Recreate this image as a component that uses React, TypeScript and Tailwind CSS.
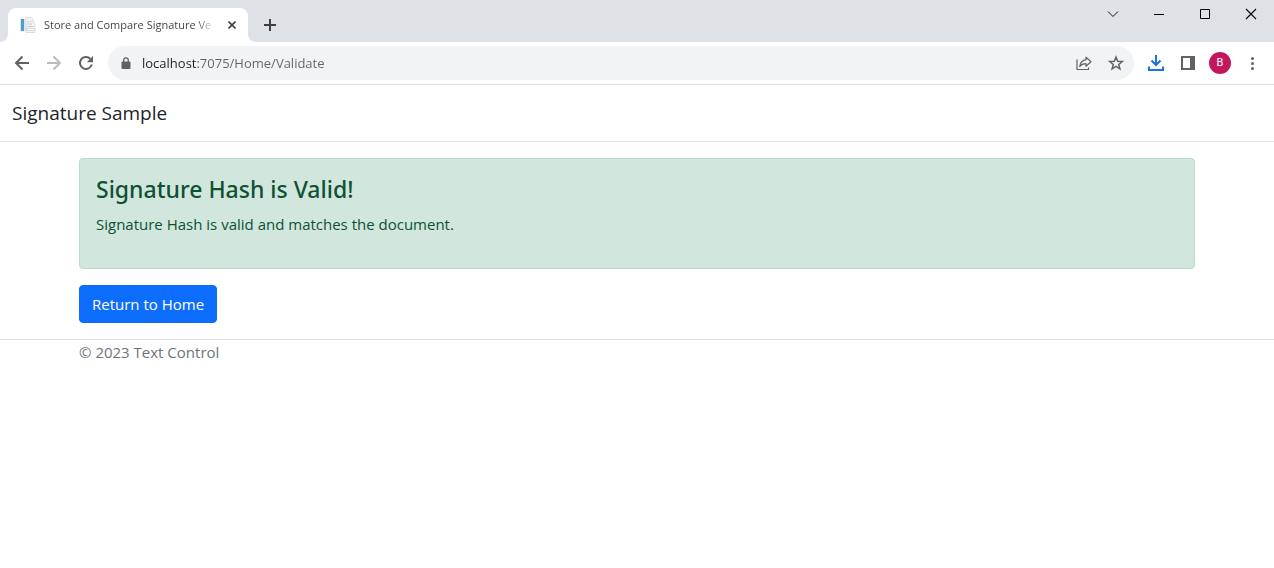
import type { ReactNode } from 'react';

type IconButtonProps = {
  label: string;
  className?: string;
  children: ReactNode;
};

function IconButton({ label, className = 'h-8 w-8', children }: IconButtonProps) {
  return (
    <button type="button" aria-label={label} className={`flex shrink-0 items-center justify-center ${className}`}>
      {children}
    </button>
  );
}

function TabStrip() {
  return (
    <div className="flex h-[42px] items-start bg-[#dee1e6]">
      <div className="flex items-end pt-2">
        <svg className="h-2 w-2" viewBox="0 0 8 8" fill="#fff">
          <path d="M8 0v8H0a8 8 0 0 0 8-8z" />
        </svg>
        <div className="flex h-[34px] w-60 items-center rounded-t-lg bg-white pr-2 pl-3">
          <svg className="h-4 w-4 shrink-0" viewBox="0 0 16 16">
            <path d="M0 1.5h6v13H0z" fill="#dfe7ee" />
            <path d="M1 2h3v12H1z" fill="#4c9ccf" />
            <path d="M5.500.5h6l2 2V13h-8z" fill="#eff1f4" stroke="#d8dbdf" strokeWidth=".6" />
            <path d="M7.500 4.500h5l2.500 2.500v8.500H6z" fill="#f4f4f6" stroke="#cfd2d6" strokeWidth=".7" />
            <path d="M8 7h4M8 9.500h5.500" stroke="#c6cacf" />
            <path d="M7 11.500h7v2H7z" fill="#fff" stroke="#c6cacf" strokeWidth=".6" />
          </svg>
          <span className="ml-2 min-w-0 flex-1 bg-linear-to-r from-[#3c4043] from-88% to-transparent bg-clip-text text-[11px] whitespace-nowrap text-transparent">
            Store and Compare Signature Ve
          </span>
          <IconButton label="Close tab" className="ml-2 h-4 w-4">
            <svg className="h-2 w-2" viewBox="0 0 8 8" stroke="#3c4043" strokeWidth="1.6">
              <path d="M.5.5l7 7M7.500.5l-7 7" />
            </svg>
          </IconButton>
        </div>
        <svg className="h-2 w-2" viewBox="0 0 8 8" fill="#fff">
          <path d="M0 0v8h8a8 8 0 0 1-8-8z" />
        </svg>
      </div>
      <IconButton label="New tab" className="mt-[11px] h-7 w-7">
        <svg className="h-3 w-3" viewBox="0 0 12 12" stroke="#3c4043" strokeWidth="2">
          <path d="M6 0v12M0 6h12" />
        </svg>
      </IconButton>
      <div className="ml-auto flex">
        <IconButton label="Search tabs" className="h-7 w-[46px]">
          <svg className="h-3 w-3" viewBox="0 0 12 12" fill="none" stroke="#111">
            <path d="M1 3.500l5 5 5-5" />
          </svg>
        </IconButton>
        <IconButton label="Minimize" className="h-7 w-[46px]">
          <svg className="h-3 w-3" viewBox="0 0 12 12" stroke="#000">
            <path d="M1 6.500h10" />
          </svg>
        </IconButton>
        <IconButton label="Maximize" className="h-7 w-[46px]">
          <svg className="h-3 w-3" viewBox="0 0 12 12" fill="none" stroke="#000">
            <path d="M1.500 1.500h9v9h-9z" />
          </svg>
        </IconButton>
        <IconButton label="Close window" className="h-7 w-[46px]">
          <svg className="h-3 w-3" viewBox="0 0 12 12" stroke="#000" strokeWidth="1.1">
            <path d="M1 1l10 10M11 1L1 11" />
          </svg>
        </IconButton>
      </div>
    </div>
  );
}

function Toolbar() {
  return (
    <div className="flex h-[43px] items-center border-b border-[#dadce0] bg-white px-1.5">
      <IconButton label="Back">
        <svg className="h-4 w-4" viewBox="0 0 16 16" fill="none" stroke="#5f6368" strokeWidth="2">
          <path d="M15 8H2.500M8.500 1.500L2 8l6.500 6.500" />
        </svg>
      </IconButton>
      <IconButton label="Forward">
        <svg className="h-4 w-4" viewBox="0 0 16 16" fill="none" stroke="#babcbe" strokeWidth="2">
          <path d="M1 8h12.500M7.500 1.500L14 8l-6.500 6.500" />
        </svg>
      </IconButton>
      <IconButton label="Reload">
        <svg className="h-4 w-4" viewBox="0 0 16 16">
          <path d="M12.300 3.700A6 6 0 1 0 13.800 9.500" fill="none" stroke="#5f6368" strokeWidth="2" />
          <path d="M15 1v6.200H8.800z" fill="#5f6368" />
        </svg>
      </IconButton>
      <div className="mx-1.5 flex h-[34px] flex-1 items-center rounded-full bg-[#f1f3f4] px-0.5">
        <IconButton label="View site information">
          <svg className="h-3 w-3" viewBox="0 0 12 12">
            <path d="M3.700 5V3.200a2.300 2.300 0 0 1 4.600 0V5" fill="none" stroke="#5f6368" strokeWidth="1.300" />
            <rect x="1.500" y="4.500" width="9" height="7.500" rx="1" fill="#5f6368" />
          </svg>
        </IconButton>
        <input
          type="text"
          aria-label="Address and search bar"
          defaultValue="localhost:7075/Home/Validate"
          className="min-w-0 flex-1 bg-[linear-gradient(to_right,#202124_55px,#5f6368_55px)] bg-clip-text text-[13px] text-transparent outline-none"
        />
        <IconButton label="Share this page">
          <svg className="h-4 w-4" viewBox="0 0 16 16" fill="none" stroke="#5f6368" strokeWidth="1.200">
            <path d="M1 4.500v10h11.500v-2" />
            <path d="M10 2.200l5 4.500-5 4.500V8.700C7 8.700 5.200 9.500 3.700 11.500 4.200 7.800 6 5.200 10 4.700z" strokeLinejoin="round" />
          </svg>
        </IconButton>
        <IconButton label="Bookmark this tab">
          <svg className="h-4 w-4" viewBox="0 0 16 16" fill="none" stroke="#5f6368" strokeWidth="1.500">
            <path d="M8 2l1.700 4.200 4.500.3-3.500 2.900 1.200 4.400L8 11.400l-3.900 2.400 1.200-4.400-3.500-2.900 4.500-.3z" />
          </svg>
        </IconButton>
      </div>
      <IconButton label="Downloads">
        <svg className="h-4 w-4" viewBox="0 0 16 16" fill="none" stroke="#1a73e8" strokeWidth="2">
          <path d="M8 0v9.500M3.500 5.500L8 10l4.500-4.500M1 11.500V15h14v-3.500" />
        </svg>
      </IconButton>
      <IconButton label="Side panel">
        <svg className="h-[14px] w-[14px]" viewBox="0 0 14 14">
          <path d="M0 0h14v14H0zM2 2v10h7V2z" fill="#5f6368" fillRule="evenodd" />
        </svg>
      </IconButton>
      <IconButton label="Profile">
        <span className="flex h-[22px] w-[22px] items-center justify-center rounded-full bg-[#c2185b] font-[Roboto] text-[11px] text-white">
          B
        </span>
      </IconButton>
      <IconButton label="Menu">
        <svg className="h-4 w-4" viewBox="0 0 16 16" fill="#5f6368">
          <circle cx="8.500" cy="3.500" r="1.500" />
          <circle cx="8.500" cy="8.500" r="1.500" />
          <circle cx="8.500" cy="13.500" r="1.500" />
        </svg>
      </IconButton>
    </div>
  );
}

export default function App() {
  return (
    <div className="min-h-screen bg-white font-['Open_Sans','Noto_Sans',sans-serif] text-[15px] leading-6 text-[#212529]">
      {/* Browser chrome */}
      <TabStrip />
      <Toolbar />

      {/* Navbar */}
      <header className="mb-4 flex h-[57px] items-center border-b border-[#dee2e6] px-3">
        <a href="/" className="text-[19px] leading-7">
          Signature Sample
        </a>
      </header>

      {/* Result */}
      <main className="mx-auto max-w-[1140px] px-3 pb-4">
        <div role="alert" className="mb-4 rounded-sm border border-[#badbcc] bg-[#d1e7dd] p-4 text-[#0f5132]">
          <h4 className="mb-2 font-['Noto_Sans','Open_Sans',sans-serif] text-[23px] leading-[29px] font-medium">
            Signature Hash is Valid!
          </h4>
          <p className="mb-4">Signature Hash is valid and matches the document.</p>
        </div>
        <button type="button" className="h-[38px] rounded-sm border border-[#0d6efd] bg-[#0d6efd] px-3 text-white">
          Return to Home
        </button>
      </main>

      {/* Footer */}
      <footer className="border-t border-[#dee2e6] text-[#6c757d]">
        <div className="mx-auto max-w-[1140px] px-3">&copy; 2023 Text Control</div>
      </footer>
    </div>
  );
}
